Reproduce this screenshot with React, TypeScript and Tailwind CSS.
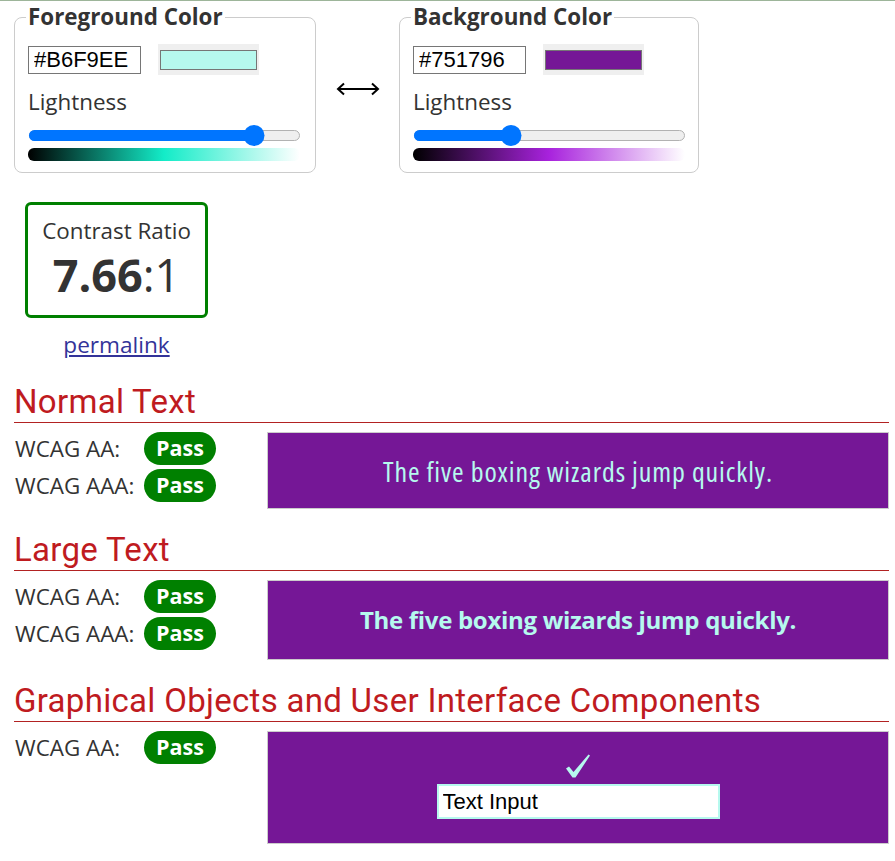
import React from "react";

const FG = "#b6f9ee";
const BG = "#751796";

interface PanelProps {
  title: string;
  hex: string;
  swatch: string;
  mid: string;
  pct: number;
  width: string;
}

function Slider({ pct }: { pct: number }) {
  return (
    <div className="relative mt-[8px] h-[20px] w-[272px]">
      <div className="absolute left-[1px] right-0 top-[5px] h-[11px] rounded-full border border-[#b2b2b2] bg-[#efefef]" />
      <div
        className="absolute left-[1px] top-[5px] h-[11px] rounded-full bg-[#0075ff]"
        style={{ width: `${pct}%` }}
      />
      <div
        className="absolute top-0 h-[21px] w-[21px] -translate-x-1/2 rounded-full bg-[#0075ff]"
        style={{ left: `${pct}%` }}
      />
    </div>
  );
}

function ColorPanel({ title, hex, swatch, mid, pct, width }: PanelProps) {
  return (
    <fieldset className={`${width} rounded-lg border border-[#cccccc] px-[13px] pb-[11px]`}>
      <legend className="-ml-[2px] px-[2px] text-[22.4px] font-bold leading-[24px] text-[#333]">{title}</legend>
      <div className="mt-[15px] flex h-[31px] items-center gap-[17px]">
        <input
          readOnly
          value={hex}
          className="h-[28px] w-[113px] border border-[#767676] px-[5px] font-['Liberation_Sans',Arial,sans-serif] text-[22px] text-black outline-none"
        />
        <div className="flex h-[31px] w-[101px] items-center justify-center bg-[#efefef]">
          <div className="h-[20px] w-[97px] border border-[#767676]" style={{ background: swatch }} />
        </div>
      </div>
      <div className="mt-[12px] text-[22.4px] leading-[30px] text-[#333]">Lightness</div>
      <Slider pct={pct} />
      <div
        className="mt-[3px] h-[13px] w-[272px] rounded-md"
        style={{ background: `linear-gradient(to right, #000000, ${mid} 50%, #ffffff)` }}
      />
    </fieldset>
  );
}

function Pass() {
  return (
    <span className="flex h-[33px] w-[72px] items-center justify-center rounded-full bg-[#008000] text-[21.5px] font-bold text-white">
      Pass
    </span>
  );
}

function Section({ title, levels, children }: { title: string; levels: string[]; children: React.ReactNode }) {
  return (
    <section>
      <h2 className="border-b border-[#b22222] pb-[3px] font-['Roboto',sans-serif] text-[33px] leading-[35px] tracking-[0.3px] text-[#bf1b1f]">
        {title}
      </h2>
      <div className="mt-[9px] flex">
        <div className="flex w-[253px] shrink-0 flex-col gap-[4px]">
          {levels.map((l) => (
            <div key={l} className="flex h-[33px] items-center">
              <span className="w-[130px] pl-[1px] text-[22.4px]">{l}</span>
              <Pass />
            </div>
          ))}
        </div>
        {children}
      </div>
    </section>
  );
}

function CheckMark() {
  return (
    <svg width="24" height="24" viewBox="0 0 24 24">
      <path d="M0 14.5 L3 12.5 L7.5 18 L22.5 0.5 L24 1.5 L9.5 23.5 L6.5 23.5 Z" fill={FG} />
    </svg>
  );
}

export default function App() {
  return (
    <div className="min-h-[861px] border-t border-[#9db59a] bg-white pb-[20px] pl-[14px] pr-[6px] pt-[4px] font-['Open_Sans',sans-serif] text-[#333]">
      <div className="flex items-center">
        <ColorPanel title="Foreground Color" hex="#B6F9EE" swatch={FG} mid="#13ecc8" pct={83} width="w-[302px]" />
        <div className="flex w-[83px] justify-center">
          <svg width="44" height="14" viewBox="0 0 44 14">
            <path d="M2 7 H42 M8 1.5 L2 7 L8 12.5 M36 1.5 L42 7 L36 12.5" stroke="#000" strokeWidth="2" fill="none" />
          </svg>
        </div>
        <ColorPanel title="Background Color" hex="#751796" swatch={BG} mid="#a822dd" pct={36} width="w-[300px]" />
      </div>

      <div className="ml-[11px] mt-[29px] w-[183px]">
        <div className="flex h-[116px] flex-col items-center rounded-md border-[3px] border-[#008000] pt-[12px]">
          <div className="text-[22.4px] leading-[27px]">Contrast Ratio</div>
          <div className="text-[45px] leading-[61px]">
            <span className="font-bold">7.66</span>:1
          </div>
        </div>
        <div className="mt-[12px] text-center text-[22.6px] leading-[30px]">
          <a href="#" className="text-[#333399] underline">
            permalink
          </a>
        </div>
      </div>

      <div className="mt-[24px] flex flex-col gap-[23px]">
        <Section title="Normal Text" levels={["WCAG AA:", "WCAG AAA:"]}>
          <div className="flex h-[77px] flex-1 items-center justify-center border border-[#cccccc]" style={{ background: BG }}>
            <span className="font-stretch-condensed text-[28px] tracking-[0.9px]" style={{ color: FG }}>
              The five boxing wizards jump quickly.
            </span>
          </div>
        </Section>
        <Section title="Large Text" levels={["WCAG AA:", "WCAG AAA:"]}>
          <div className="flex h-[80px] flex-1 items-center justify-center border border-[#cccccc]" style={{ background: BG }}>
            <span className="text-[24px] font-bold tracking-[-0.3px]" style={{ color: FG }}>
              The five boxing wizards jump quickly.
            </span>
          </div>
        </Section>
        <Section title="Graphical Objects and User Interface Components" levels={["WCAG AA:"]}>
          <div className="flex h-[113px] flex-1 flex-col items-center border border-[#cccccc] pt-[22px]" style={{ background: BG }}>
            <CheckMark />
            <input
              readOnly
              value="Text Input"
              className="mt-[6px] h-[35px] w-[283px] border-2 bg-white px-[4px] font-['Liberation_Sans',Arial,sans-serif] text-[22px] text-black outline-none"
              style={{ borderColor: FG }}
            />
          </div>
        </Section>
      </div>
    </div>
  );
}
